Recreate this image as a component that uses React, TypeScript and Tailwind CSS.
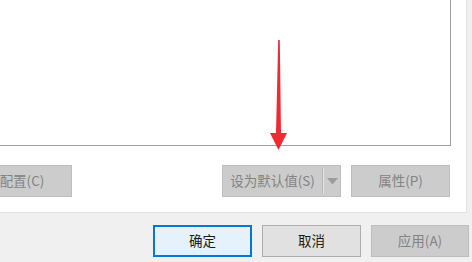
import React from "react";

const font = { fontFamily: '"Noto Sans CJK SC", "Liberation Sans", sans-serif' };

const App = () => {
  return (
    <div
      className="relative w-[472px] h-[262px] overflow-hidden bg-[#f0f0f0] flex flex-col text-[13.5px]"
      style={font}
    >
      {/* white tab panel */}
      <div className="w-[467px] h-[213px] bg-white border-r border-b border-[#e2e2e2] flex flex-col shrink-0">
        <div className="w-[451px] h-[146px] border-r border-b border-[#a0a0a0] bg-white shrink-0" />
        <div className="flex mt-[19px] h-[32px]">
          <button className="-ml-[28px] w-[100px] h-full bg-[#cccccc] border border-[#bfbfbf] text-[#838383] leading-none">
            配置(C)
          </button>
          <div className="ml-[150px] w-[119px] h-full bg-[#cccccc] border border-[#bfbfbf] flex items-center text-[#838383]">
            <span className="w-[99px] text-center leading-none">设为默认值(S)</span>
            <span className="w-[2px] h-[26px] bg-[#e4e4e4] border-l border-[#b8b8b8]" />
            <span className="flex-1 flex justify-center">
              <svg width="11" height="7" viewBox="0 0 11 7">
                <path d="M0 0 H11 L5.5 6.5 Z" fill="#9c9c9c" />
              </svg>
            </span>
          </div>
          <button className="ml-[10px] w-[99px] h-full bg-[#cccccc] border border-[#bfbfbf] text-[#838383] leading-none">
            属性(P)
          </button>
        </div>
      </div>

      {/* dialog buttons */}
      <div className="flex justify-end pr-[3px] mt-[12px] gap-[10px]">
        <button className="w-[99px] h-[32px] bg-[#e5f1fb] border-2 border-[#0078d7] text-[#1a1a1a] leading-none">
          确定
        </button>
        <button className="w-[99px] h-[32px] bg-[#e1e1e1] border border-[#adadad] text-[#1a1a1a] leading-none">
          取消
        </button>
        <button className="w-[98px] h-[32px] bg-[#cccccc] border border-[#bfbfbf] text-[#838383] leading-none">
          应用(A)
        </button>
      </div>

      {/* red annotation arrow */}
      <svg
        className="absolute left-[268px] top-[38px]"
        width="22"
        height="114"
        viewBox="0 0 22 114"
      >
        <path d="M10.2 2 L11.8 2 L13 95 L19 95 L10.5 112 L2 95 L8 95 Z" fill="#ee2b30" />
      </svg>
    </div>
  );
};

export default App;
